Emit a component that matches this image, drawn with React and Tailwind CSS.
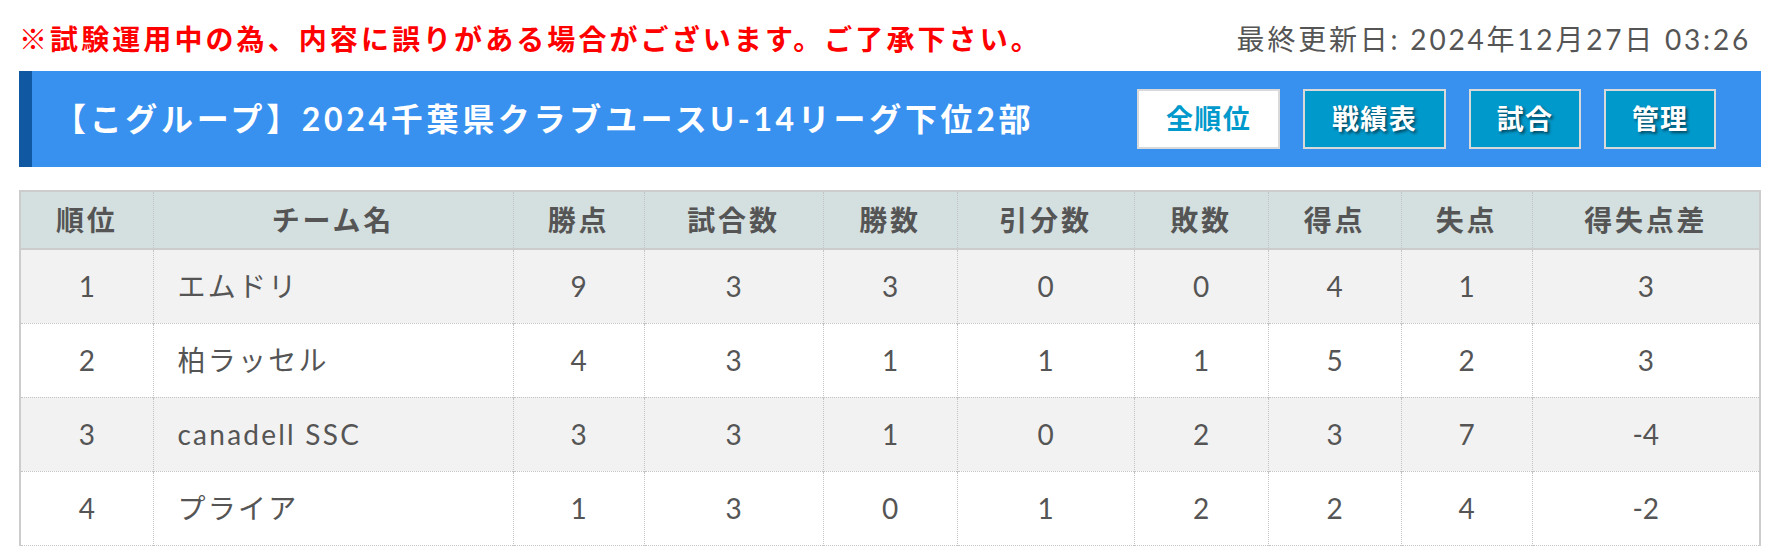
import React from "react";

const columns = [
  { label: "順位", width: "w-[133px]" },
  { label: "チーム名", width: "w-[360px]" },
  { label: "勝点", width: "w-[131px]" },
  { label: "試合数", width: "w-[179px]" },
  { label: "勝数", width: "w-[134px]" },
  { label: "引分数", width: "w-[177px]" },
  { label: "敗数", width: "w-[134px]" },
  { label: "得点", width: "w-[133px]" },
  { label: "失点", width: "w-[131px]" },
  { label: "得失点差", width: "w-[228px]" },
];

const standings = [
  { rank: 1, team: "エムドリ", pts: 9, played: 3, win: 3, draw: 0, lose: 0, gf: 4, ga: 1, diff: "3" },
  { rank: 2, team: "柏ラッセル", pts: 4, played: 3, win: 1, draw: 1, lose: 1, gf: 5, ga: 2, diff: "3" },
  { rank: 3, team: "canadell SSC", pts: 3, played: 3, win: 1, draw: 0, lose: 2, gf: 3, ga: 7, diff: "-4" },
  { rank: 4, team: "プライア", pts: 1, played: 3, win: 0, draw: 1, lose: 2, gf: 2, ga: 4, diff: "-2" },
];

const App = () => {
  return (
    <div className="w-[1765px] h-[555px] bg-white overflow-hidden font-['Lato','Noto_Sans_CJK_JP',sans-serif]">
      <div className="ml-[19px] w-[1742px]">
        {/* Notice + last update */}
        <div className="h-[71px] flex items-center justify-between pt-[7px] pr-[10px]">
          <p className="text-[28px] font-bold text-[#ff0000] tracking-[0.11em] leading-none">
            ※試験運用中の為、内容に誤りがある場合がございます。ご了承下さい。
          </p>
          <p className="text-[28px] text-[#555555] tracking-[0.1em] leading-none">
            最終更新日: 2024年12月27日 03:26
          </p>
        </div>

        {/* Group header */}
        <div className="h-[96px] bg-[#3891ef] border-l-[13px] border-[#1059a2] flex items-center justify-between pl-[22px] pr-[45px]">
          <h1 className="text-[32px] font-bold text-white tracking-[0.115em] leading-none">
            【こグループ】2024千葉県クラブユースU-14リーグ下位2部
          </h1>
          <div className="flex gap-[23px]">
            <button className="w-[143px] h-[60px] bg-white border-2 border-[#d9d9d9] text-[#0099cc] text-[27px] font-bold tracking-[0.05em]">
              全順位
            </button>
            <button className="w-[143px] h-[60px] bg-[#0099cc] border-2 border-[#d9d9d9] text-white text-[27px] font-bold tracking-[0.05em] [text-shadow:2px_2px_3px_rgba(0,0,0,0.55)]">
              戦績表
            </button>
            <button className="w-[112px] h-[60px] bg-[#0099cc] border-2 border-[#d9d9d9] text-white text-[27px] font-bold tracking-[0.05em] [text-shadow:2px_2px_3px_rgba(0,0,0,0.55)]">
              試合
            </button>
            <button className="w-[112px] h-[60px] bg-[#0099cc] border-2 border-[#d9d9d9] text-white text-[27px] font-bold tracking-[0.05em] [text-shadow:2px_2px_3px_rgba(0,0,0,0.55)]">
              管理
            </button>
          </div>
        </div>

        {/* Standings table */}
        <table className="mt-[23px] w-[1742px] table-fixed border-collapse border-x-2 border-t-2 border-[#cccccc] text-[#555555]">
          <thead>
            <tr className="bg-[#d4dfdf] border-b-2 border-[#cccccc]">
              {columns.map((col) => (
                <th
                  key={col.label}
                  className={`${col.width} h-[58px] text-[28px] font-bold tracking-[0.1em] text-center border-r border-dotted border-[#c4c4c4] last:border-r-0`}
                >
                  {col.label}
                </th>
              ))}
            </tr>
          </thead>
          <tbody>
            {standings.map((row, i) => (
              <tr
                key={row.rank}
                className={`${i % 2 === 0 ? "bg-[#f2f2f2]" : "bg-white"} border-b border-dotted border-[#c4c4c4] text-[28px]`}
              >
                <td className="h-[74px] text-center border-r border-dotted border-[#c4c4c4]">{row.rank}</td>
                <td className="h-[74px] text-left pl-[24px] tracking-[0.08em] border-r border-dotted border-[#c4c4c4]">{row.team}</td>
                <td className="h-[74px] text-center border-r border-dotted border-[#c4c4c4]">{row.pts}</td>
                <td className="h-[74px] text-center border-r border-dotted border-[#c4c4c4]">{row.played}</td>
                <td className="h-[74px] text-center border-r border-dotted border-[#c4c4c4]">{row.win}</td>
                <td className="h-[74px] text-center border-r border-dotted border-[#c4c4c4]">{row.draw}</td>
                <td className="h-[74px] text-center border-r border-dotted border-[#c4c4c4]">{row.lose}</td>
                <td className="h-[74px] text-center border-r border-dotted border-[#c4c4c4]">{row.gf}</td>
                <td className="h-[74px] text-center border-r border-dotted border-[#c4c4c4]">{row.ga}</td>
                <td className="h-[74px] text-center">{row.diff}</td>
              </tr>
            ))}
          </tbody>
        </table>
      </div>
    </div>
  );
};

export default App;
